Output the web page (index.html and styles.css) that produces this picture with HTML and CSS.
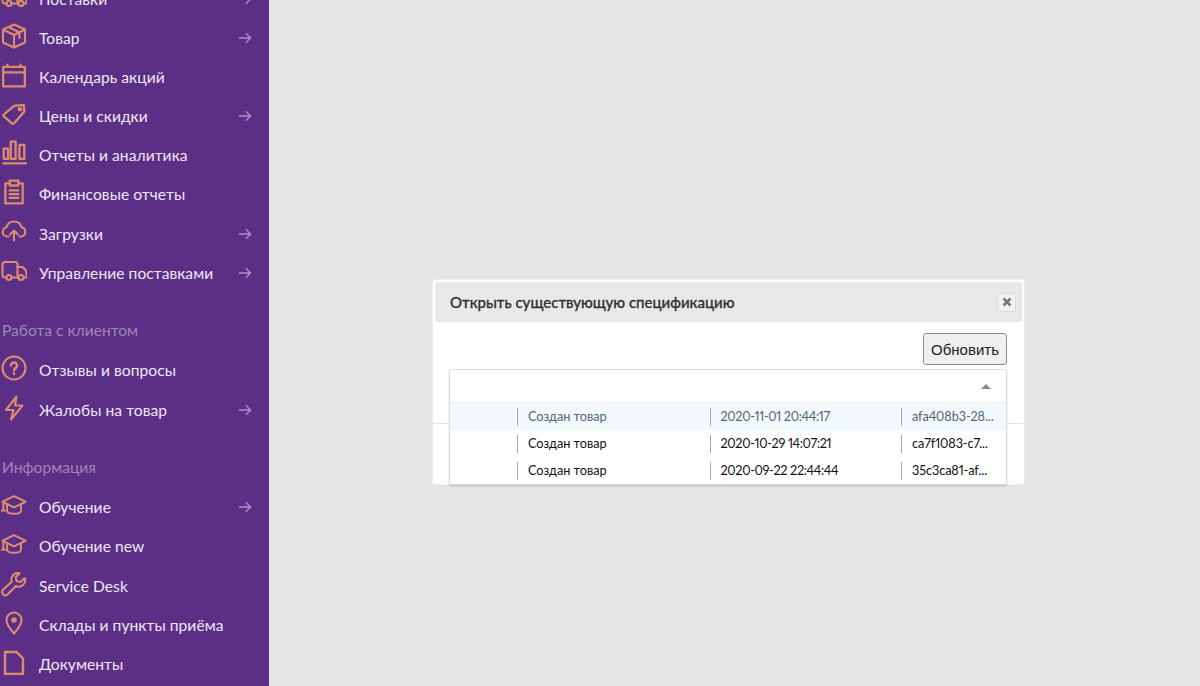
FILE: index.html
```html
<!DOCTYPE html>
<html lang="ru">
<head>
<meta charset="utf-8">
<title>Спецификации</title>
<link rel="stylesheet" href="styles.css">
</head>
<body>
<svg class="sprite" width="0" height="0" aria-hidden="true">
  <symbol id="arrow" viewBox="0 0 14 12"><path d="M1 6h11.500M7.800 1.200 12.600 6l-4.800 4.800"/></symbol>
  <symbol id="truck" viewBox="0 0 26 26"><path d="M5.500 19.500H4A2.500 2.500 0 0 1 1.500 17V6.500A2.500 2.500 0 0 1 4 4h10a2.500 2.500 0 0 1 2.500 2.500v13h-6"/><path d="M16.500 9H21a2 2 0 0 1 1.500.7l2.300 2.800c.4.500.7 1 .7 1.700v5.300H23M16.500 19.500h1"/><circle cx="8" cy="19.500" r="2.500"/><circle cx="20" cy="19.500" r="2.500"/></symbol>
  <symbol id="box" viewBox="0 0 26 26"><path d="M13 1.500 24 6.500v13L13 24.500 2 19.500v-13z"/><path d="M2 6.500 13 12l11-5.500M13 12v12.500M7.500 4l11 5.500v5.500"/></symbol>
  <symbol id="calendar" viewBox="0 0 24 24"><path d="M2 4.500h20v18H2zM2 9.500h20M6 2.500v2M18 2.500v2"/></symbol>
  <symbol id="tag" viewBox="0 0 24 22"><path d="M2.500 11.500 12 3.500l9-1 .5 6.500L12 19.500a1.500 1.500 0 0 1-2 .2l-7.500-6.700a1 1 0 0 1 0-1.500z"/><circle cx="17.500" cy="6.500" r="1"/></symbol>
  <symbol id="bars" viewBox="0 0 24 24"><path d="M2 21.500h21M2.500 8h4v9.500h-4zM9 1.500h4.500v16H9zM17 4.500h4.500v13H17z"/></symbol>
  <symbol id="clipboard" viewBox="0 0 20 24"><path d="M6 4H2v18.500h16V4h-4"/><path d="M6 1.500h8V6H6zM6 10.500h8M6 14h8M6 17.500h8"/></symbol>
  <symbol id="cloud" viewBox="0 0 26 24"><path d="M7.500 16.500H6.500A4.700 4.700 0 0 1 5.500 7.200 7.800 7.800 0 0 1 20.500 7.200a4.700 4.700 0 0 1-.500 9.300h-1.500"/><path d="M13 20.500V11M9 14.500l4-4 4 4"/></symbol>
  <symbol id="help" viewBox="0 0 26 26"><circle cx="13" cy="13" r="11.500"/><path class="thick" d="M10 10.500a3 3 0 1 1 4.500 2.600c-1 .6-1.500 1.200-1.500 2.400M13 18.500v.5"/></symbol>
  <symbol id="bolt" viewBox="0 0 20 26"><path d="M12.500 1.500 2 15h7.500L7 24.500 18.500 10.500H11z"/></symbol>
  <symbol id="cap" viewBox="0 0 28 24"><path d="M14 2.500 26.500 8.500 14 14.500 1.500 8.500z"/><path d="M6.500 11.500v6.500c0 2.200 3.500 3.500 7.500 3.500s7.500-1.300 7.500-3.500v-6.500M2.500 9v8"/><path d="M1 18.500c.5-1.500 2.500-1.500 3 0"/></symbol>
  <symbol id="wrench" viewBox="0 0 26 26"><path d="M16.500 2a6.500 6.500 0 0 0-5.700 8.800L2 18.800a3.200 3.200 0 0 0 4.800 4.500l8-8.300A6.500 6.500 0 0 0 23.800 7l-4.300 4-4-1-.8-3.800L18.500 2.300A6.500 6.500 0 0 0 16.500 2z"/></symbol>
  <symbol id="pin" viewBox="0 0 20 26"><path d="M10 23.500C5.500 18.500 2.500 14.500 2.500 10a7.500 7.500 0 0 1 15 0c0 4.500-3 8.500-7.500 13.500z"/><circle class="solid" cx="10" cy="10" r="2.800"/></symbol>
  <symbol id="doc" viewBox="0 0 20 26"><path class="thick" d="M1 3h11.500L19 9.500V25H1z"/></symbol>
</svg>

<div class="app">
  <nav class="sidebar">
    <ul class="menu menu-first">
      <li class="item"><span class="icon-cell"><svg class="icon"><use href="#truck"/></svg></span><span class="label">Поставки</span><svg class="arrow"><use href="#arrow"/></svg></li>
      <li class="item"><span class="icon-cell"><svg class="icon"><use href="#box"/></svg></span><span class="label">Товар</span><svg class="arrow"><use href="#arrow"/></svg></li>
      <li class="item"><span class="icon-cell"><svg class="icon"><use href="#calendar"/></svg></span><span class="label">Календарь акций</span></li>
      <li class="item"><span class="icon-cell"><svg class="icon"><use href="#tag"/></svg></span><span class="label">Цены и скидки</span><svg class="arrow"><use href="#arrow"/></svg></li>
      <li class="item"><span class="icon-cell"><svg class="icon"><use href="#bars"/></svg></span><span class="label">Отчеты и аналитика</span></li>
      <li class="item"><span class="icon-cell"><svg class="icon"><use href="#clipboard"/></svg></span><span class="label">Финансовые отчеты</span></li>
      <li class="item"><span class="icon-cell"><svg class="icon"><use href="#cloud"/></svg></span><span class="label">Загрузки</span><svg class="arrow"><use href="#arrow"/></svg></li>
      <li class="item"><span class="icon-cell"><svg class="icon"><use href="#truck"/></svg></span><span class="label">Управление поставками</span><svg class="arrow"><use href="#arrow"/></svg></li>
    </ul>
    <h2 class="section">Работа с клиентом</h2>
    <ul class="menu">
      <li class="item"><span class="icon-cell"><svg class="icon"><use href="#help"/></svg></span><span class="label">Отзывы и вопросы</span></li>
      <li class="item"><span class="icon-cell"><svg class="icon"><use href="#bolt"/></svg></span><span class="label">Жалобы на товар</span><svg class="arrow"><use href="#arrow"/></svg></li>
    </ul>
    <h2 class="section">Информация</h2>
    <ul class="menu">
      <li class="item"><span class="icon-cell"><svg class="icon"><use href="#cap"/></svg></span><span class="label">Обучение</span><svg class="arrow"><use href="#arrow"/></svg></li>
      <li class="item"><span class="icon-cell"><svg class="icon"><use href="#cap"/></svg></span><span class="label">Обучение new</span></li>
      <li class="item"><span class="icon-cell"><svg class="icon"><use href="#wrench"/></svg></span><span class="label">Service Desk</span></li>
      <li class="item"><span class="icon-cell"><svg class="icon"><use href="#pin"/></svg></span><span class="label">Склады и пункты приёма</span></li>
      <li class="item"><span class="icon-cell"><svg class="icon"><use href="#doc"/></svg></span><span class="label">Документы</span></li>
    </ul>
  </nav>

  <main class="content">
    <section class="modal">
      <header class="modal-head">
        <h1 class="modal-title">Открыть существующую спецификацию</h1>
        <button class="close" type="button" aria-label="Закрыть"><svg class="close-x" viewBox="0 0 10 10"><path d="M1.500 1.500l7 7M8.500 1.500l-7 7"/></svg></button>
      </header>
      <div class="modal-body">
        <div class="toolbar"><button class="refresh" type="button">Обновить</button></div>
        <div class="combo">
          <div class="combo-input"><span class="caret"></span></div>
          <div class="combo-list">
            <div class="row row-active"><span class="cell cell-a">Создан товар</span><span class="cell cell-b">2020-11-01 20:44:17</span><span class="cell cell-c">afa408b3-28...</span></div>
            <div class="row"><span class="cell cell-a">Создан товар</span><span class="cell cell-b">2020-10-29 14:07:21</span><span class="cell cell-c">ca7f1083-c7...</span></div>
            <div class="row"><span class="cell cell-a">Создан товар</span><span class="cell cell-b">2020-09-22 22:44:44</span><span class="cell cell-c">35c3ca81-af...</span></div>
          </div>
        </div>
        <div class="modal-rule"></div>
      </div>
    </section>
  </main>
</div>
</body>
</html>
```
FILE: styles.css
```css
* { box-sizing: border-box; }
html, body { margin: 0; height: 100%; overflow: hidden; }
body { font-family: Lato, "Noto Sans", sans-serif; background: #e5e5e5; }
.sprite { position: absolute; }
.app { display: flex; height: 686px; overflow: hidden; }

.sidebar { width: 269px; flex: none; height: 686px; overflow: hidden; background: #5c2f86; color: #efe6f3; }
.menu { list-style: none; margin: 0; padding: 0; }
.menu-first { margin-top: -21px; }
.item { display: flex; align-items: center; height: 39.170px; }
.icon-cell { width: 39px; flex: none; display: flex; justify-content: center; padding: 0 11px 4px 0; }
.icon { width: 26px; height: 26px; fill: none; stroke: #dc8c6e; stroke-width: 2.100; stroke-linejoin: round; stroke-linecap: round; }
.solid { fill: #dc8c6e; stroke: none; }
.thick { stroke-width: 2.400; }
.label { flex: 1; font-size: 15.600px; line-height: 20px; letter-spacing: .05px; white-space: nowrap; }
.arrow { width: 14px; height: 12px; margin-right: 17px; fill: none; stroke: #ab93c2; stroke-width: 1.300; }
.section { margin: 19.400px 0 0; height: 39.170px; padding-left: 2px; font-size: 15.600px; font-weight: 400; line-height: 37px; color: #9f86b8; }

.content { flex: 1; padding: 279px 0 0 163px; }
.modal { position: relative; width: 593px; height: 206px; padding: 3px; background: #fff; border-radius: 3px; border: 1px solid #eeeeee; }
.modal-head { display: flex; align-items: center; justify-content: space-between; height: 40px; margin: -1px -1px 0; padding: 0 6px 0 15px; background: #e8e8e8; border-radius: 3px; }
.modal-title { margin: 0; font-size: 15px; font-weight: 500; line-height: 20px; color: #333; -webkit-text-stroke: .3px #333; }
.close { width: 19px; height: 19px; padding: 0; display: flex; align-items: center; justify-content: center; background: #f1f1f1; border: 1px solid #dcdcdc; border-radius: 2px; }
.close-x { width: 10px; height: 10px; fill: none; stroke: #777; stroke-width: 2.600; }

.modal-body { padding: 11px 14px 0 14px; }
.toolbar { display: flex; justify-content: flex-end; height: 32px; }
.refresh { width: 84px; height: 32px; padding: 0; font-family: "Liberation Sans", Arial, sans-serif; font-size: 15px; color: #222; background: #efefef; border: 1px solid #8d8d8d; border-radius: 3px; }
.combo { position: absolute; left: 16px; top: 89px; width: 558px; background: #fff; border: 1px solid #dcdcdc; border-radius: 3px; box-shadow: 0 1px 2px rgba(0,0,0,.18); z-index: 1; }
.combo-input { display: flex; align-items: center; justify-content: flex-end; height: 33px; padding-right: 15px; border-bottom: 1px solid #ececec; }
.caret { width: 0; height: 0; border-left: 5px solid transparent; border-right: 5px solid transparent; border-bottom: 5px solid #888; }
.row { display: flex; align-items: center; height: 27px; font-size: 12.700px; font-variant-numeric: proportional-nums; color: #111; }
.row-active { background: #f2f9fb; color: #566570; }
.cell { height: 18px; line-height: 16px; padding-left: 10px; border-left: 1px solid #a9a9a9; white-space: nowrap; }
.cell-a { width: 193px; margin-left: 67px; }
.cell-b { width: 191px; padding-left: 9.500px; letter-spacing: -.35px; }
.cell-c { flex: 1; letter-spacing: -.1px; }
.modal-rule { position: absolute; left: 0; right: 0; top: 143px; height: 1px; background: #e6e6e6; }
```
